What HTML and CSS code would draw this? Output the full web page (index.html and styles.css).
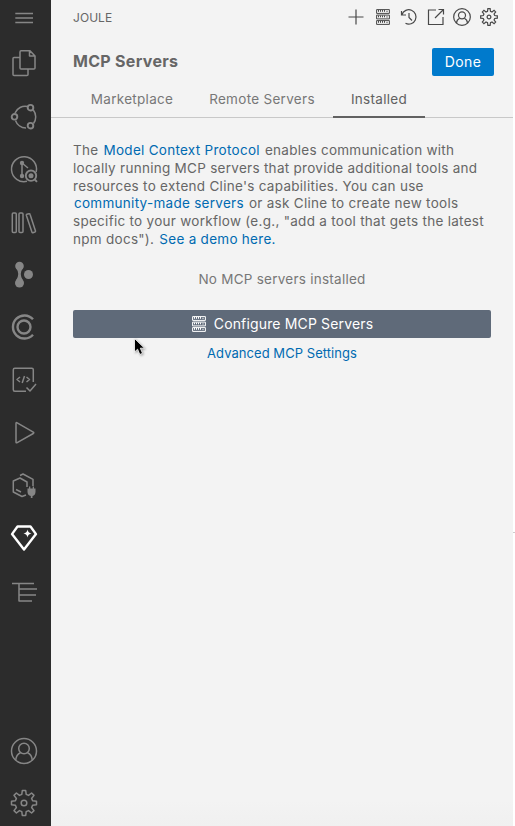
FILE: index.html
```html
<!DOCTYPE html>
<html lang="en">
<head>
<meta charset="utf-8">
<title>MCP Servers</title>
<link rel="stylesheet" href="styles.css">
</head>
<body>
<svg class="defs" aria-hidden="true">
  <symbol id="gear" viewBox="-15 -15 30 30"><path d="M-2.2-8.600-1.700-12.500H1.700L2.200-8.600 4.500-7.600 7.600-10 10-7.600 7.600-4.500 8.600-2.200 12.500-1.700V1.700L8.600 2.200 7.600 4.500 10 7.600 7.600 10 4.500 7.600 2.200 8.600 1.700 12.500H-1.700L-2.200 8.600-4.500 7.600-7.600 10-10 7.600-7.600 4.500-8.600 2.200-12.500 1.700V-1.700L-8.600-2.200-7.600-4.500-10-7.600-7.600-10-4.500-7.600Z"/><circle r="2.8"/></symbol>
  <symbol id="user" viewBox="-15 -15 30 30"><circle r="12.500"/><circle cy="-2.500" r="5.300"/><path d="M-8.300 9.200C-8 5.500-6.500 3.200-3.500 1.800M8.300 9.200C8 5.500 6.500 3.200 3.500 1.800"/></symbol>
  <symbol id="server" viewBox="0 0 14 16"><path d="M.6.6h12.800v3.800H.6zM.6 6.100h12.800v3.800H.6zM.6 11.600h12.800v3.800H.6zM2.500 1v1.800M4.500 1v1.800M6.500 1v1.800M8.500 1v1.800M11 1.800v1.300M2.500 6.500v1.800M4.500 6.500v1.800M6.500 6.500v1.800M8.500 6.500v1.800M11 7.300v1.300M2.500 12v1.800M4.500 12v1.800M6.500 12v1.800M8.500 12v1.800M11 12.800v1.300"/></symbol>
</svg>
<div class="app">
  <nav class="rail">
    <div class="item menu"><svg class="icon" viewBox="-15 -15 30 30"><path d="M-8.700-4.500H9M-8.700 0H9M-8.700 4.500H9"/></svg></div>
    <div class="item"><svg class="icon" viewBox="-15 -15 30 30"><path d="M-3-12.300H6L11-7V5q0 1-1 1H-3q-1 0-1-1v-16q0-1.300 1-1.300ZM5.500-12v5H11M-4.500-5.500H-10q-1 0-1 1v16q0 1 1 1H3q1 0 1-1V6.500"/></svg></div>
    <div class="item"><svg class="icon" viewBox="-15 -15 30 30"><path d="M-9-3A11 11 0 0 1 3.500-9.500M9.300-6A11 11 0 0 1 9.500 7.500M2 12A11 11 0 0 1-8.500 4.500"/><g class="heavy"><circle cx="6.500" cy="-8.300" r="2.800"/><circle cx="-9.500" cy=".8" r="2.800"/><circle cx="6.500" cy="9.700" r="2.800"/></g></svg></div>
    <div class="item"><svg class="icon" viewBox="-15 -15 30 30"><path d="M12.200 3A12.500 12.500 0 1 0 3 12.300M-2-6V7M-2-6 4-1"/><g class="solid"><circle cx="-2" cy="-6" r="2.200"/><circle cx="-2" cy="7" r="2.200"/><circle cx="7" cy="6.700" r="2.500"/></g><g class="heavy"><circle cx="7" cy="6.700" r="5.200"/><path d="M10.800 10.500 13 12.800"/></g></svg></div>
    <div class="item"><svg class="icon" viewBox="-15 -15 30 30"><rect x="-11.700" y="-9" width="4" height="19.600" rx="1"/><rect x="-5" y="-9" width="4" height="19.600" rx="1"/><path d="M2.800-7.700 5-8.300q.8-.2 1 .6L11.500 9q.1.700-.6 1l-2 .7q-.8.200-1-.6L2.300-6.800q-.1-.7.500-.9Z"/></svg></div>
    <div class="item"><svg class="icon" viewBox="-15 -15 30 30"><g class="solid"><circle cx="-4.500" cy="-9" r="4.300"/><circle cx="-4.500" cy="8" r="4.500"/><circle cx="4.500" cy="-.5" r="4.500"/><path d="M-8-7Q-3.500-1-8 5.500H-1Q-5.500-1-1-7Z"/></g></svg></div>
    <div class="item"><svg class="icon" viewBox="-15 -15 30 30"><g class="ring"><circle r="6.500"/><path d="M9-7.700A11.500 11.500 0 1 0 9 7.700"/></g></svg></div>
    <div class="item"><svg class="icon" viewBox="-15 -15 30 30"><path d="M9.300 2V-10.200q0-1.500-1.500-1.500H-9.200q-1.500 0-1.500 1.500V9.800q0 1.500 1.500 1.500H2M-4-3-7-.5-4 2M2.500-3 5.500-.5 2.500 2M.5-4-1.800 3M2.500 7.500 6 11 12 4"/></svg></div>
    <div class="item"><svg class="icon" viewBox="-15 -15 30 30"><path d="M-8-9.500V9q0 1.200 1.200.6L9.300.5q1-.7 0-1.300L-6.800-10.200q-1.200-.6-1.200.7Z"/></svg></div>
    <div class="item"><svg class="icon" viewBox="-15 -15 30 30"><path d="M-4-10.500-1-12 9-6.700V0M3 1V-4L-4-8-10.700-5V6L-2 10.500 2 9M-8 3.500-3 6"/><path class="solid" d="M5 .5v2H3.500V6q.2 3.300 3.300 4V12H8.500V10Q11.300 9.300 11.500 6V2.500H10v-2H8.700v2H6.300v-2Z"/></svg></div>
    <div class="item active"><svg class="icon" viewBox="-15 -15 30 30"><path d="M-6.500-12.500H6.500L12-4.900 0 10.500-12-4.900Z"/><path class="solid" d="M3.500-9.500Q4-6 7.500-5.500 4-5 3.500-1.500 3-5-.5-5.500 3-6 3.500-9.500Z"/></svg></div>
    <div class="item"><svg class="icon" viewBox="-15 -15 30 30"><path d="M-12-8.500H10M-5-8.500V9.500M-5-3H13M-5 3H12M-5 9H8"/></svg></div>
    <div class="item bottom"><svg class="icon"><use href="#user"/></svg></div>
    <div class="item"><svg class="icon"><use href="#gear"/></svg></div>
  </nav>
  <main class="panel">
    <header class="top">
      <span class="brand">JOULE</span>
      <div class="tools">
        <svg viewBox="-10 -10 20 20"><path d="M-7.500 0h15M0-7.500v15"/></svg>
        <svg class="server"><use href="#server"/></svg>
        <svg viewBox="-10 -10 20 20"><path d="M-7.500-6v4h4.500M-7-2.500A7.200 7.200 0 1 1-3.500 6.300M0-4V.5L3 3.500"/></svg>
        <svg viewBox="-10 -10 20 20"><path d="M0-7h-7.500V7.500H7V0M2.500-7.500h5v5M7.500-7.500-1 1"/></svg>
        <svg class="scaled"><use href="#user"/></svg>
        <svg class="scaled"><use href="#gear"/></svg>
      </div>
    </header>
    <div class="heading">
      <h1>MCP Servers</h1>
      <button class="done">Done</button>
    </div>
    <div class="tabs">
      <div class="tab market">Marketplace</div>
      <div class="tab remote">Remote Servers</div>
      <div class="tab selected">Installed</div>
    </div>
    <section class="content">
      <p class="intro">The <a>Model Context Protocol</a> enables communication with<br>locally running MCP servers that provide additional tools and<br>resources to extend Cline's capabilities. You can use<br><a>community-made servers</a> or ask Cline to create new tools<br>specific to your workflow (e.g., "add a tool that gets the latest<br>npm docs"). <a>See a demo here.</a></p>
      <p class="empty">No MCP servers installed</p>
      <button class="configure"><svg class="server"><use href="#server"/></svg><span>Configure MCP Servers</span></button>
      <a class="advanced">Advanced MCP Settings</a>
    </section>
  </main>
  <div class="edge"></div>
</div>
<svg class="cursor" viewBox="0 0 12 20"><path d="M1.500 1.500V15L4.600 12.200 6.800 17.500 9.500 16.300 7.300 11.200H11.500Z"/></svg>
</body>
</html>
```

FILE: styles.css
```css
* { box-sizing: border-box; }
body { margin: 0; width: 515px; height: 826px; overflow: hidden; font-family: Inter, "Liberation Sans", sans-serif; font-size: 13px; color: #666; }
svg { fill: none; stroke: currentColor; flex: none; }
.defs { position: absolute; width: 0; height: 0; }
.app { display: flex; height: 826px; }
.rail { width: 51px; flex: none; background: #2c2c2c; color: #868686; display: flex; flex-direction: column; }
.item { height: 52.9px; flex: none; display: flex; align-items: center; padding: 1px 0 0 9.300px; }
.menu { height: 36px; padding-top: 0; }
.bottom { margin-top: 107.500px; height: 51px; }
.icon { width: 30px; height: 30px; stroke-width: 1.5; stroke-linejoin: round; }
.active { color: #fff; }
.active .icon { stroke-width: 2.4; }
.heavy { stroke-width: 1.9; }
.ring { stroke-width: 2.4; }
.solid { fill: currentColor; stroke: none; }
.panel { width: 462px; flex: none; background: linear-gradient(#f3f3f3 800px, #f0f0f0); }
.edge { width: 2px; background: linear-gradient(#ccc, #ccc) 0 532px / 2px 1px no-repeat #fff; }
.top { height: 35px; padding: 0 14.500px 0 22px; display: flex; align-items: center; justify-content: space-between; }
.brand { font-size: 12px; letter-spacing: .05px; }
.tools { display: flex; align-items: center; gap: 6.500px; color: #484848; padding-bottom: 1px; }
.tools svg { width: 20px; height: 20px; stroke-width: 1.200; }
.tools .server, .configure .server { width: 14px; height: 16px; stroke-width: 1; }
.tools .server { margin: 0 3px; }
.tools .scaled { stroke-width: 1.800; }
.heading { height: 41px; padding: 0 19px 0 22px; margin-top: 13px; display: flex; align-items: flex-start; justify-content: space-between; }
h1 { margin: 2px 0 0; font-size: 16px; line-height: 22px; font-weight: 700; letter-spacing: .300px; }
button { border: 0; color: #fff; font: 14px/20px Inter, sans-serif; border-radius: 2px; }
.done { width: 62px; height: 28px; background: #007acc; padding: 0; letter-spacing: .350px; }
.tabs { display: flex; height: 29px; border-bottom: 1px solid #c8c8c8; padding-left: 22px; }
.tab { height: 29px; line-height: 20px; font-size: 13.500px; text-align: center; white-space: nowrap; letter-spacing: .300px; color: #777; }
.market { width: 118px; }
.remote { width: 142px; }
.selected { width: 92px; border-bottom: 2px solid #616161; color: #616161; }
.content { padding: 24px 22px 0; text-align: center; }
.intro { margin: 0; font-size: 13.500px; line-height: 17.800px; letter-spacing: .280px; text-align: left; white-space: nowrap; }
a { color: #006ab1; }
.intro a { padding: 0 1px; }
.empty { margin: 20px 0 0; line-height: 20px; font-size: 13.500px; letter-spacing: .250px; color: #777; }
.configure { width: 418px; height: 28px; margin-top: 21px; background: #5f6a79; display: flex; align-items: center; justify-content: center; gap: 8px; padding: 0 0 0 1px; letter-spacing: .150px; }
.advanced { display: block; margin-top: 5px; line-height: 20px; letter-spacing: .050px; }
.cursor { position: absolute; left: 132.500px; top: 337px; width: 12px; height: 20px; filter: drop-shadow(1px 1px 1px #0005); }
.cursor path { fill: #000; stroke: #fff; stroke-width: .8; }
```
